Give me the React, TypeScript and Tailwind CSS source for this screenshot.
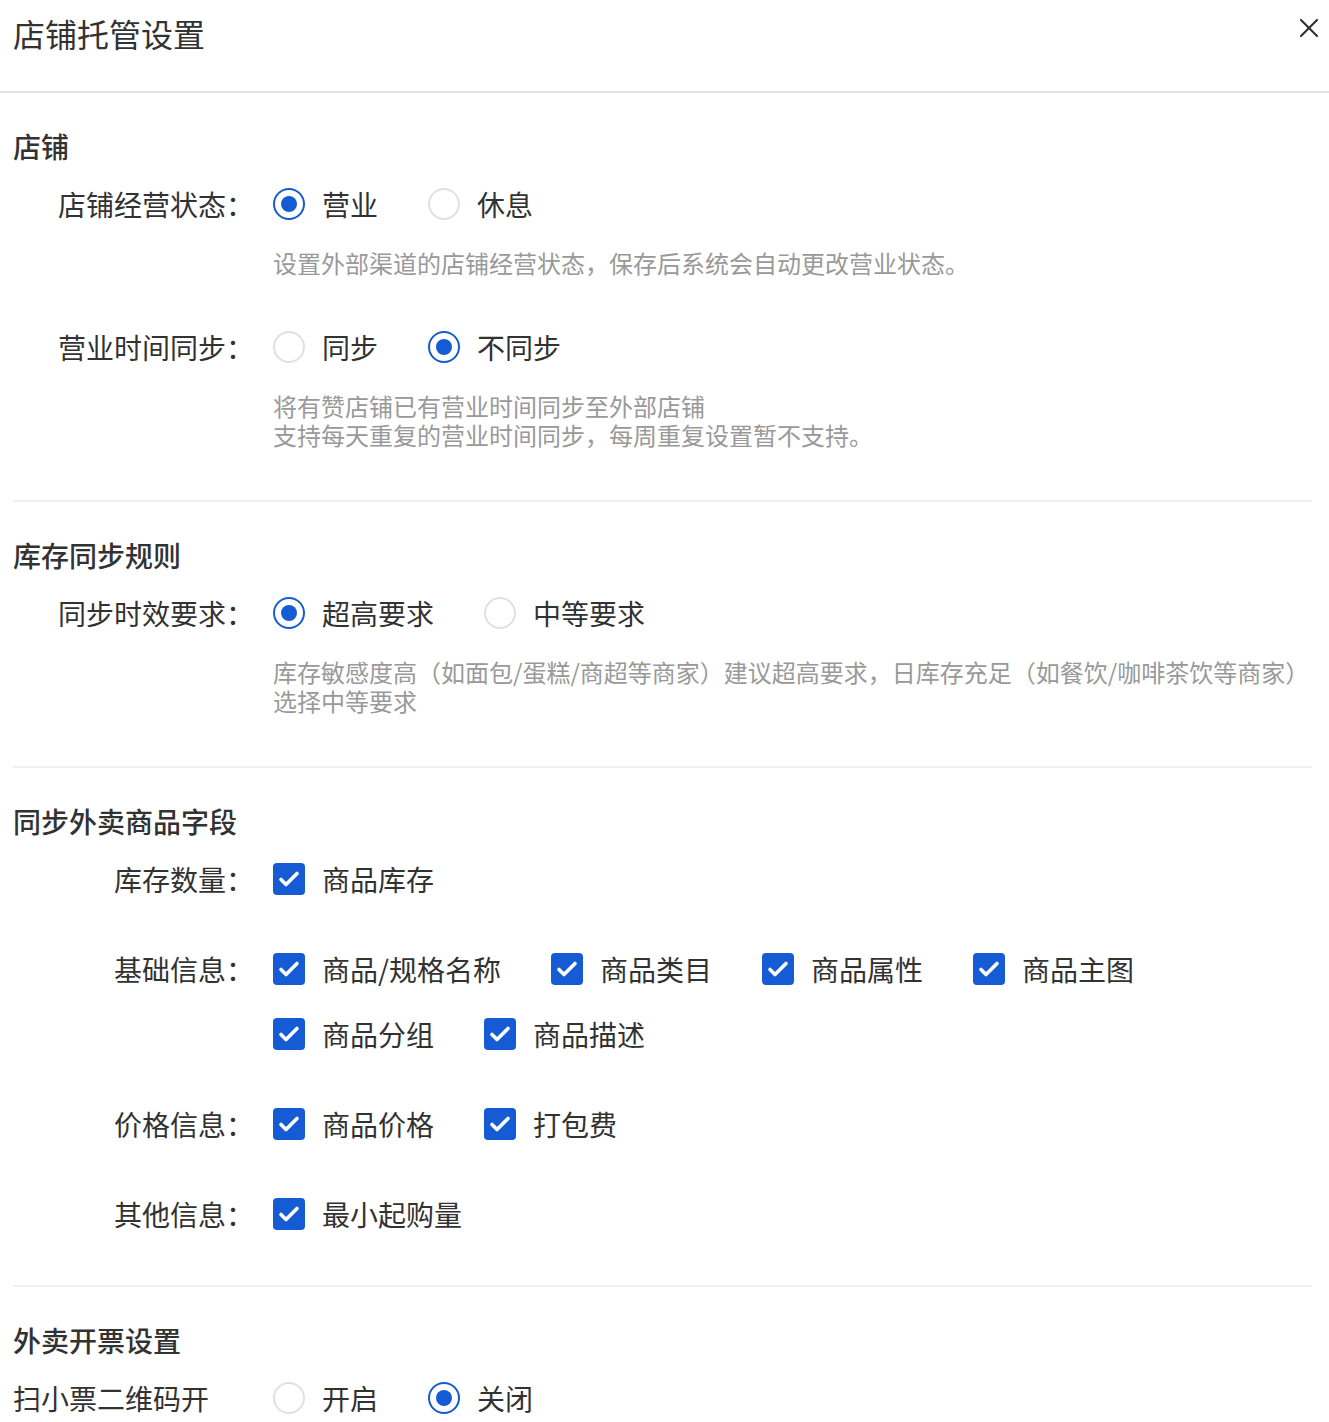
import { X } from "lucide-react";

const font = { fontFamily: '"Noto Sans CJK SC", "Noto Sans", sans-serif' };

function Radio({ label, checked }: { label: string; checked?: boolean }) {
  return (
    <div className="flex items-center h-[40px] mr-[50px]">
      <span
        className={`w-[32px] h-[32px] rounded-full border-2 flex items-center justify-center ${
          checked ? "border-[#155bd4]" : "border-[#e0e0e0]"
        }`}
      >
        {checked && <span className="w-[16px] h-[16px] rounded-full bg-[#155bd4]" />}
      </span>
      <span className="ml-[17px] text-[28px] text-[#323233]">{label}</span>
    </div>
  );
}

function Checkbox({ label }: { label: string }) {
  return (
    <div className="flex items-center h-[40px] mr-[50px]">
      <span className="w-[32px] h-[32px] rounded-[4px] bg-[#155bd4] flex items-center justify-center">
        <svg width="32" height="32" viewBox="0 0 32 32" fill="none">
          <path d="M8 16.5l5 5 11-11" stroke="white" strokeWidth="3.6" strokeLinecap="round" strokeLinejoin="round" />
        </svg>
      </span>
      <span className="ml-[17px] text-[28px] text-[#323233]">{label}</span>
    </div>
  );
}

function Item({
  label,
  children,
  help,
  left,
}: {
  label: string;
  children: React.ReactNode;
  help?: string[];
  left?: boolean;
}) {
  return (
    <div className="flex">
      <div
        className={`w-[241px] shrink-0 h-[40px] leading-[40px] text-[28px] text-[#323233] whitespace-nowrap ${
          left ? "text-left" : "text-right"
        }`}
      >
        {label}
      </div>
      <div className="ml-[19px] flex-1 min-w-0">
        <div className="flex flex-wrap gap-y-[25px]">{children}</div>
        {help && (
          <div className="mt-[24px] text-[24px] leading-[29px] text-[#999]">
            {help.map((h) => (
              <div key={h}>{h}</div>
            ))}
          </div>
        )}
      </div>
    </div>
  );
}

function Section({ title, children, last }: { title: string; children: React.ReactNode; last?: boolean }) {
  return (
    <div className={last ? "" : "border-b-2 border-[#f0f0f0] pb-[51px]"}>
      <div className="mt-[33px] text-[28px] leading-[40px] font-medium text-[#323233]">{title}</div>
      <div className="mt-[18px] flex flex-col gap-[50px]">{children}</div>
    </div>
  );
}

export default function App() {
  return (
    <div className="w-[1329px] h-[1422px] bg-white overflow-hidden" style={font}>
      <div className="h-[93px] border-b-2 border-[#e3e3e3] flex justify-between pl-[13px] pr-[4px]">
        <div className="pt-[13px] text-[32px] leading-[40px] text-[#323233]">店铺托管设置</div>
        <X className="mt-[12px] w-[32px] h-[32px] text-[#323233]" strokeWidth={1.6} />
      </div>
      <div className="pl-[13px] pr-[17px]">
        <Section title="店铺">
          <Item label="店铺经营状态：" help={["设置外部渠道的店铺经营状态，保存后系统会自动更改营业状态。"]}>
            <Radio label="营业" checked />
            <Radio label="休息" />
          </Item>
          <Item
            label="营业时间同步："
            help={["将有赞店铺已有营业时间同步至外部店铺", "支持每天重复的营业时间同步，每周重复设置暂不支持。"]}
          >
            <Radio label="同步" />
            <Radio label="不同步" checked />
          </Item>
        </Section>
        <Section title="库存同步规则">
          <Item
            label="同步时效要求："
            help={["库存敏感度高（如面包/蛋糕/商超等商家）建议超高要求，日库存充足（如餐饮/咖啡茶饮等商家）", "选择中等要求"]}
          >
            <Radio label="超高要求" checked />
            <Radio label="中等要求" />
          </Item>
        </Section>
        <Section title="同步外卖商品字段">
          <Item label="库存数量：">
            <Checkbox label="商品库存" />
          </Item>
          <Item label="基础信息：">
            <Checkbox label="商品/规格名称" />
            <Checkbox label="商品类目" />
            <Checkbox label="商品属性" />
            <Checkbox label="商品主图" />
            <Checkbox label="商品分组" />
            <Checkbox label="商品描述" />
          </Item>
          <Item label="价格信息：">
            <Checkbox label="商品价格" />
            <Checkbox label="打包费" />
          </Item>
          <Item label="其他信息：">
            <Checkbox label="最小起购量" />
          </Item>
        </Section>
        <Section title="外卖开票设置" last>
          <Item label="扫小票二维码开" left>
            <Radio label="开启" />
            <Radio label="关闭" checked />
          </Item>
        </Section>
      </div>
    </div>
  );
}
